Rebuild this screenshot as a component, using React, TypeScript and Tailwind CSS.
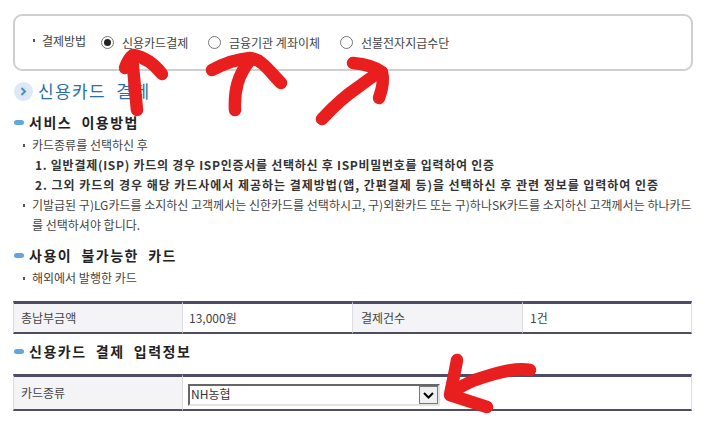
import React from 'react';

const font = { kr: "font-['Noto_Sans_CJK_KR','Liberation_Sans',sans-serif]" };

const Radio: React.FC<{ checked?: boolean; label: string; className: string }> = ({ checked, label, className }) => (
  <label className={`flex items-center ${className}`}>
    <span className="w-[13px] h-[13px] rounded-full border border-[#777] bg-white flex items-center justify-center shrink-0">
      {checked && <span className="w-[7px] h-[7px] rounded-full bg-[#222]"></span>}
    </span>
    <span className="ml-[8px] text-[12px] text-[#444] leading-none">{label}</span>
  </label>
);

const Heading: React.FC<{ children: React.ReactNode; className?: string }> = ({ children, className }) => (
  <h3 className={`flex items-center text-[14px] font-bold text-[#222] tracking-[1.5px] [word-spacing:4.6px] leading-[20px] ${className ?? ''}`}>
    <span className="w-[10px] h-[5px] rounded-full bg-[#64a5dc] mr-[5px] shrink-0"></span>
    <span>{children}</span>
  </h3>
);

const Dot = () => <span className="absolute left-[-9px] top-[9px] w-[2px] h-[3px] bg-[#555]"></span>;

export default function App() {
  return (
    <div className={`relative w-[710px] h-[433px] overflow-hidden bg-white pl-[13px] pr-[17px] pt-[14px] ${font.kr}`}>
      {/* payment method box */}
      <div className="h-[57px] border-2 border-[#cfcfcf] rounded-[9px] flex items-center relative">
        <span className="ml-[18px] w-[2px] h-[3px] bg-[#555] mb-[4px]"></span>
        <span className="ml-[7px] text-[12px] text-[#444] leading-none mb-[3px] w-[59px]">결제방법</span>
        <Radio checked label="신용카드결제" className="w-[107px]" />
        <Radio label="금융기관 계좌이체" className="w-[132px]" />
        <Radio label="선불전자지급수단" className="" />
      </div>

      <div className="flex items-center mt-[11px] h-[19px]">
        <span className="w-[19px] h-[19px] rounded-full bg-[#dde8f5] flex items-center justify-center shrink-0 ml-[1px]">
          <svg width="7" height="9" viewBox="0 0 7 9">
            <path d="M1.5 1 L5 4.5 L1.5 8" fill="none" stroke="#4a8cc8" strokeWidth="2" />
          </svg>
        </span>
        <h2 className="ml-[5px] mb-[3px] text-[17px] text-[#2a6ea8] tracking-[1.4px] [word-spacing:5px] leading-none">신용카드 결제</h2>
      </div>

      <Heading className="mt-[11px] ml-[1px]">서비스 이용방법</Heading>

      <div className="mt-[3px] ml-[19px] text-[12px] text-[#444] leading-[20px]">
        <p className="relative">
          <Dot />카드종류를 선택하신 후
        </p>
        <p className="ml-[3px] font-bold text-[#333] whitespace-nowrap tracking-[0.72px]">1. 일반결제(ISP) 카드의 경우 ISP인증서를 선택하신 후 ISP비밀번호를 입력하여 인증</p>
        <p className="ml-[3px] font-bold text-[#333] whitespace-nowrap tracking-[0.96px]">2. 그외 카드의 경우 해당 카드사에서 제공하는 결제방법(앱, 간편결제 등)을 선택하신 후 관련 정보를 입력하여 인증</p>
        <p className="relative whitespace-nowrap">
          <Dot />기발급된 구)LG카드를 소지하신 고객께서는 신한카드를 선택하시고, 구)외환카드 또는 구)하나SK카드를 소지하신 고객께서는 하나카드
        </p>
        <p>를 선택하셔야 합니다.</p>
      </div>

      <Heading className="mt-[10px] ml-[1px]">사용이 불가능한 카드</Heading>

      <div className="mt-[3px] ml-[19px] text-[12px] text-[#444] leading-[20px]">
        <p className="relative">
          <Dot />해외에서 발행한 카드
        </p>
      </div>

      <table className="mt-[13px] w-[679px] table-fixed border-separate border-spacing-0 text-[12px] text-[#444]">
        <tbody>
          <tr className="h-[33px]">
            <td className="w-[170px] bg-[#f4f4f7] pl-[7px] border-t-[3px] border-b-2 border-t-[#4f4d63] border-b-[#4f4d63] border-l border-l-[#dcdce2] border-r border-r-[#dcdce2]">총납부금액</td>
            <td className="w-[170px] pl-[6px] border-t-[3px] border-b-2 border-t-[#4f4d63] border-b-[#4f4d63] border-r border-r-[#dcdce2]">13,000원</td>
            <td className="w-[170px] bg-[#f4f4f7] pl-[8px] border-t-[3px] border-b-2 border-t-[#4f4d63] border-b-[#4f4d63] border-r border-r-[#dcdce2]">결제건수</td>
            <td className="pl-[7px] border-t-[3px] border-b-2 border-t-[#4f4d63] border-b-[#4f4d63] border-r border-r-[#dcdce2]">1건</td>
          </tr>
        </tbody>
      </table>

      <Heading className="mt-[7px] ml-[1px]">신용카드 결제 입력정보</Heading>

      <table className="mt-[13px] w-[679px] table-fixed border-separate border-spacing-0 text-[12px] text-[#444]">
        <tbody>
          <tr className="h-[37px]">
            <td className="w-[170px] bg-[#f4f4f7] pl-[7px] border-t-[3px] border-b-2 border-t-[#4f4d63] border-b-[#4f4d63] border-l border-l-[#dcdce2] border-r border-r-[#dcdce2]">카드종류</td>
            <td className="pl-[5px] border-t-[3px] border-b-2 border-t-[#4f4d63] border-b-[#4f4d63] border-r border-r-[#dcdce2]">
              <div className="mt-[4px] w-[252px] h-[22px] border-2 border-t-[#666] border-l-[#666] border-b-[#e3e3e3] border-r-[#e3e3e3] flex items-center justify-between">
                <span className="leading-none pl-[1px] mb-[3px] text-[#333]">NH농협</span>
                <span className="w-[19px] h-[18px] border border-[#777] bg-[#f0f0f0] flex items-center justify-center">
                  <svg width="11" height="7" viewBox="0 0 11 7">
                    <path d="M1 1 L5.5 5.5 L10 1" fill="none" stroke="#000" strokeWidth="2" />
                  </svg>
                </span>
              </div>
            </td>
          </tr>
        </tbody>
      </table>

      {/* hand-drawn red arrows over the page */}
      <svg className="absolute inset-0 pointer-events-none" width="710" height="433" viewBox="0 0 710 433" fill="none" stroke="#e91e1e" strokeWidth="12.5" strokeLinecap="round" strokeLinejoin="round">
        <path d="M137 110 C135 90 134 75 132 58" />
        <path d="M125 68 C127 62 129 58 133 55 C145 57 155 65 162 74" />
        <path d="M235 110 C234 90 238 75 250 60" />
        <path d="M212 70 C225 63 238 59 250 58 C262 59 270 72 281 83" />
        <path d="M322 119 C335 105 345 96 357 88 C365 82 372 77 379 72" />
        <path d="M353 63 C365 64 375 67 382 72 C384 80 382 90 379 98" />
        <path d="M457 360 C455 372 452 384 450 395 C462 399 475 403 487 407" />
        <path d="M530 370 C515 367 495 373 475 380 C465 384 458 388 452 393" />
      </svg>
    </div>
  );
}
